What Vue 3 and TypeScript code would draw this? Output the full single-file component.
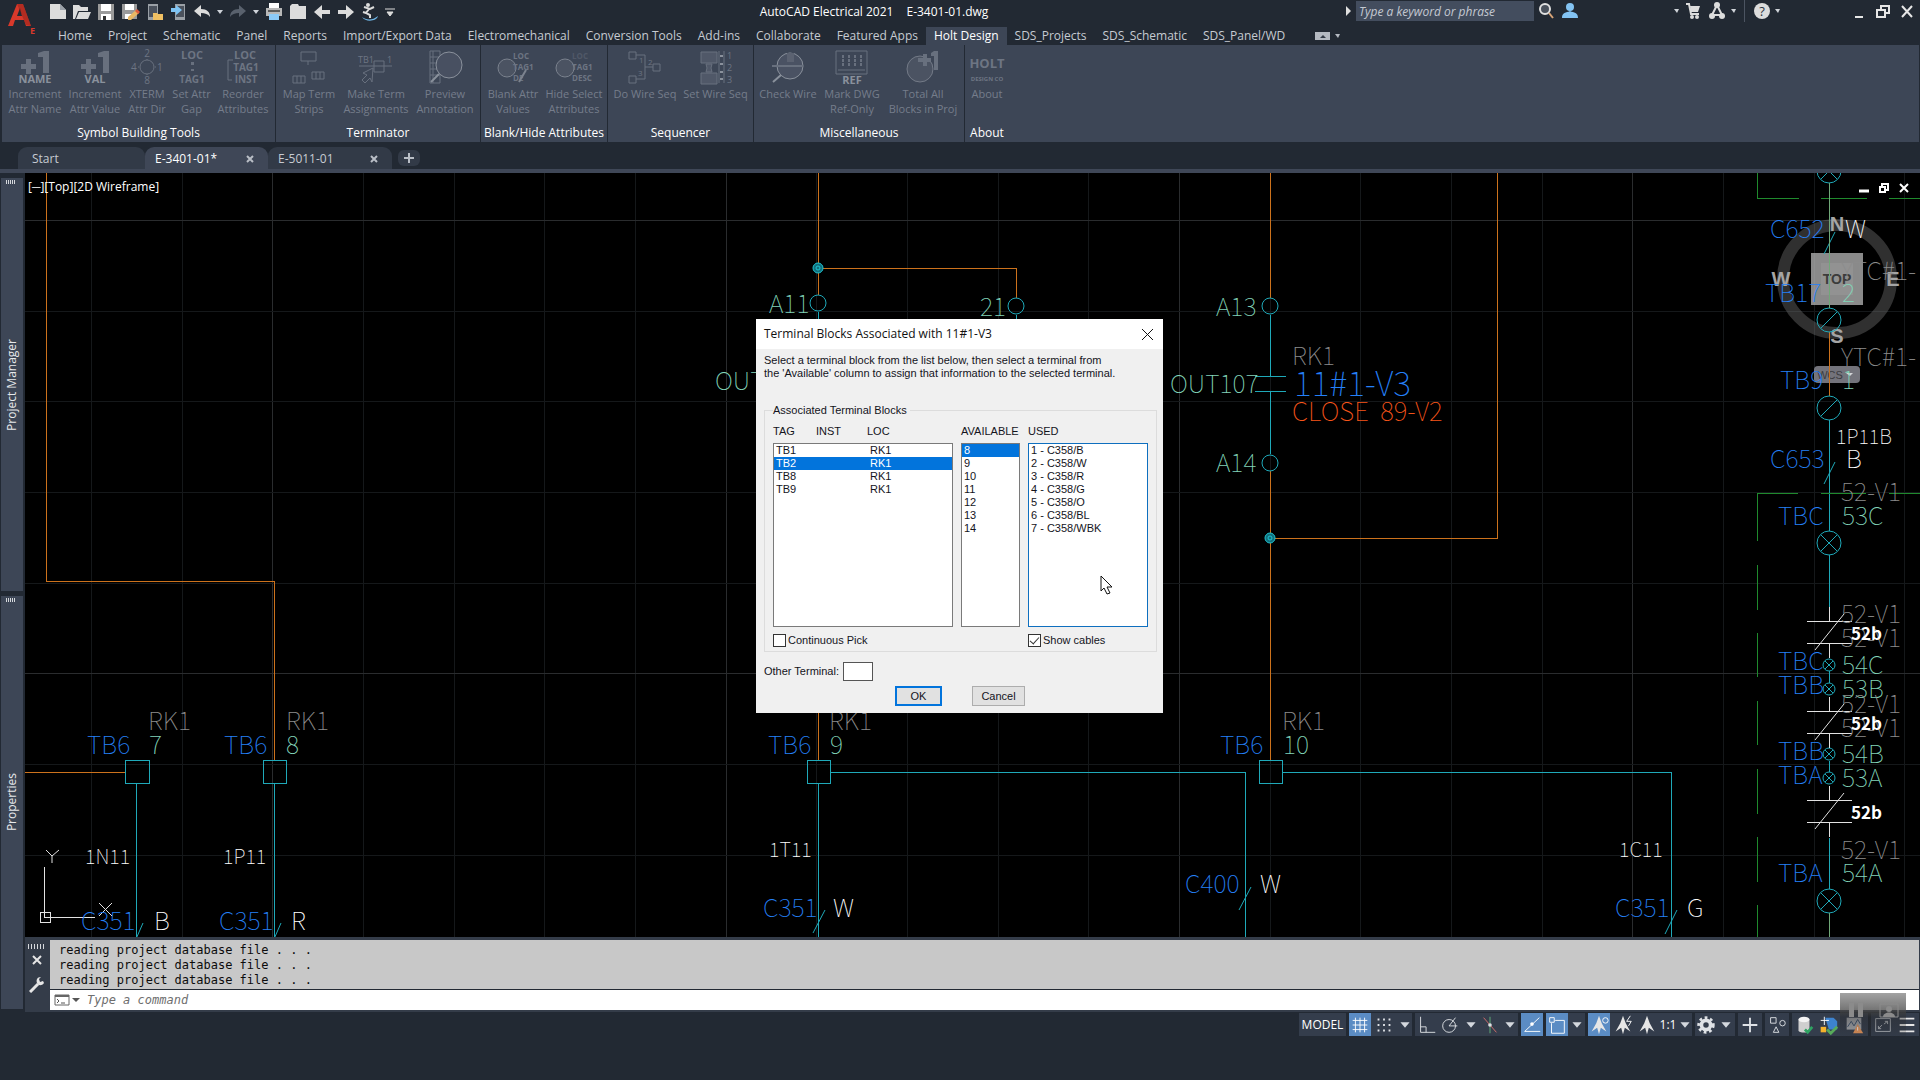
<script setup lang="ts">
import { ref } from 'vue'

interface Tool { label: string[]; icon: string; width: number }
interface Panel { title: string; tools: Tool[] }
type Label = [number, number, string, string]

const quickIcons: { name: string; art: string; caret?: boolean }[] = [
  { name: 'New', art: '<path d="M4 4h10l6 6v9H4z" fill="#dcdcdc"/><path d="M14 4v6h6z" fill="#9aa0a8"/>' },
  { name: 'Open', art: '<path d="M3 5h6l2 2h7v4H8l-3 8H3z" fill="#dcdcdc"/><path d="M9 12h12l-3 7H6z" fill="#dcdcdc"/>' },
  { name: 'Save', art: '<path d="M4 4h16v16H4z" fill="#9a9a9a"/><path d="M7 4h10v7H7z" fill="#fff"/><path d="M7 14h10v6H7z" fill="#fff"/><path d="M9 16h3v4H9z" fill="#333"/>' },
  { name: 'Save As', art: '<path d="M4 4h15v15H4z" fill="#9a9a9a"/><path d="M7 4h9v6H7z" fill="#fff"/><path d="M7 14h7v5H7z" fill="#fff"/><path d="M10 17l8-7 3 3-8 7h-3z" fill="#e9b864"/><path d="M17 11l2-2 3 3-2 2z" fill="#e05a3c"/>' },
  { name: 'Open from Web and Mobile', art: '<path d="M6 4h10v16H6z" fill="#9aa0a6"/><path d="M7 6h8v11H7z" fill="#4a515c"/><path d="M11 13h4l1 1h5v6H11z" fill="#f0c063"/>' },
  { name: 'Save to Web and Mobile', art: '<path d="M9 4h10v16H9z" fill="#9aa0a6"/><path d="M10 6h8v11h-8z" fill="#4a515c"/><path d="M5 8h5V5l6 5-6 5v-3H5z" fill="#7fc4f4"/>' },
  { name: 'Undo', art: '<path d="M4 11l7-6v4c6 0 9 3 9 8-2-3-5-4-9-4v4z" fill="#dcdcdc"/>', caret: true },
  { name: 'Redo', art: '<path d="M20 11l-7-6v4c-6 0-9 3-9 8 2-3 5-4 9-4v4z" fill="#59616d"/>', caret: true },
  { name: 'Plot', art: '<path d="M7 3h10v5H7z" fill="#fff"/><path d="M4 8h16v8H4z" fill="#b8b8b8"/><path d="M6 10h12v2H6z" fill="#5a5a5a"/><path d="M7 14h10v6H7z" fill="#8ccaf7"/>' },
  { name: 'Project', art: '<path d="M4 6l2-2h6l1 2h7v13H4z" fill="#dcdcdc"/>' },
  { name: 'Previous', art: '<path d="M4 12l8-7v5h8v4h-8v5z" fill="#dcdcdc"/>' },
  { name: 'Next', art: '<path d="M20 12l-8-7v5H4v4h8v5z" fill="#dcdcdc"/>' },
  { name: 'Surfer', art: '<circle cx="10" cy="5" r="2" fill="#dcdcdc"/><path d="M6 7l6 2 4-2M11 9l-3 4 4 2v3M5 12l3 1" stroke="#dcdcdc" stroke-width="2" fill="none"/><path d="M4 17c4 3 10 4 16-1-1 5-12 7-16 1z" fill="#6fb6e6"/>' }
]

const menuTabs = ['Home', 'Project', 'Schematic', 'Panel', 'Reports', 'Import/Export Data', 'Electromechanical', 'Conversion Tools', 'Add-ins', 'Collaborate', 'Featured Apps', 'Holt Design', 'SDS_Projects', 'SDS_Schematic', 'SDS_Panel/WD']
const activeMenu = ref('Holt Design')

const plusOne = (word: string) =>
  `<path d="M4 15h5v-5h5v5h5v5h-5v5H9v-5H4zM21 4l6-2h5v22h-6V8h-5z" fill="currentColor"/><text x="18" y="34" text-anchor="middle" font-size="11" font-weight="700" class="hot">${word}</text>`

const ribbon: Panel[] = [
  { title: 'Symbol Building Tools', tools: [
    { label: ['Increment', 'Attr Name'], width: 62, icon: plusOne('NAME') },
    { label: ['Increment', 'Attr Value'], width: 58, icon: plusOne('VAL') },
    { label: ['XTERM', 'Attr Dir'], width: 46, icon: '<circle cx="18" cy="18" r="7" fill="none" stroke="currentColor"/><path d="M10 18h-1M26 18h1M18 11v-1M18 25v1" stroke="currentColor"/><text x="18" y="8" text-anchor="middle" font-size="10">2</text><text x="18" y="35" text-anchor="middle" font-size="10">8</text><text x="2" y="22" font-size="10">4</text><text x="28" y="22" font-size="10">1</text>' },
    { label: ['Set Attr', 'Gap'], width: 43, icon: '<text x="18" y="10" text-anchor="middle" font-size="11" font-weight="700">LOC</text><path d="M17 13h3v3h-3zM17 20h3v2h-3z" fill="currentColor"/><text x="18" y="34" text-anchor="middle" font-size="10" font-weight="700">TAG1</text>' },
    { label: ['Reorder', 'Attributes'], width: 60, icon: '<text x="20" y="10" text-anchor="middle" font-size="11" font-weight="700">LOC</text><text x="21" y="22" text-anchor="middle" font-size="10" font-weight="700">TAG1</text><text x="21" y="34" text-anchor="middle" font-size="10" font-weight="700">INST</text><path d="M8 11H3v20h4" fill="none" stroke="currentColor"/>' }
  ] },
  { title: 'Terminator', tools: [
    { label: ['Map Term', 'Strips'], width: 62, icon: '<g fill="none" stroke="currentColor"><path d="M10 3h15v9H10zM17 12v4M2 27h12v7H2zM6 27v7M10 27v7M21 23h12v7H21zM25 23v7M29 23v7"/></g>' },
    { label: ['Make Term', 'Assignments'], width: 72, icon: '<g fill="none" stroke="currentColor"><path d="M1 17h33M16 12h10v11H16z" /><path d="M15 19l-10 5 4 2-5 5 3 3 5-5 2 4z"/></g><text x="0" y="14" font-size="9">TB1</text><text x="29" y="14" font-size="9">1</text>' },
    { label: ['Preview', 'Annotation'], width: 66, icon: '<g fill="none" stroke="currentColor"><path d="M3 2h10v32H3zM3 8h10M3 14h10M3 20h10M3 26h10M6 2v32"/></g><circle cx="22" cy="16" r="13" fill="#485061" stroke="#8a919c"/><path d="M12 25l-8 8" stroke="#8a919c" stroke-width="2"/>' }
  ] },
  { title: 'Blank/Hide Attributes', tools: [
    { label: ['Blank Attr', 'Values'], width: 60, icon: '<circle cx="12" cy="19" r="9" fill="#4b5362" stroke="#7b828e"/><g font-size="8" font-weight="700"><text x="18" y="10">LOC</text><text x="18" y="21">TAG1</text><text x="18" y="32">DE</text></g><path d="M31 21l-7 12" stroke="#7b828e" stroke-width="2"/>' },
    { label: ['Hide Select', 'Attributes'], width: 62, icon: '<circle cx="9" cy="19" r="9" fill="#4b5362" stroke="#7b828e"/><g font-size="8" font-weight="700"><text x="16" y="10" opacity=".4">LOC</text><text x="16" y="21">TAG1</text><text x="16" y="32">DESC</text></g>' }
  ] },
  { title: 'Sequencer', tools: [
    { label: ['Do Wire Seq'], width: 70, icon: '<path d="M2 3h7v7H2zM2 27h7v7H2zM26 15h7v7h-7zM9 6h9v24H9M18 18h8" fill="none" stroke="currentColor"/><g font-size="8"><text x="12" y="14">1</text><text x="21" y="16">2</text><text x="11" y="27">3</text></g>' },
    { label: ['Set Wire Seq'], width: 71, icon: '<path d="M3 3h16v11H3zM3 24h16v11H3zM8 15h6l-1 4 1 4H8l1-4zM21 2v32M26 2v32" fill="#505868" stroke="currentColor"/><path d="M22 7h3M22 15h3M22 23h3M22 30h3" stroke="#8a919c" stroke-width="2"/><g font-size="9"><text x="29" y="10">1</text><text x="29" y="22">2</text><text x="29" y="34">3</text></g>' }
  ] },
  { title: 'Miscellaneous', tools: [
    { label: ['Check Wire'], width: 64, icon: '<circle cx="20" cy="17" r="13" fill="#4a5263" stroke="#8a919c"/><path d="M17 4h7v9h-7z" fill="#5b6271"/><path d="M2 17h31" stroke="currentColor" stroke-width="2"/><path d="M11 26l-8 7" stroke="#8a919c" stroke-width="2"/>' },
    { label: ['Mark DWG', 'Ref-Only'], width: 64, icon: '<path d="M2 2h31v23H2zM4 21h27" fill="none" stroke="currentColor"/><path d="M9 6v11M15 6v11M21 6v11M27 6v11" stroke="currentColor" stroke-width="2" stroke-dasharray="3 1"/><text x="18" y="35" text-anchor="middle" font-size="11" font-weight="700" class="hot">REF</text>' },
    { label: ['Total All', 'Blocks in Proj'], width: 78, icon: '<circle cx="15" cy="20" r="13" fill="#4b5362" stroke="#737a87"/><path d="M13 9h5V5h4v4h4v4h-4v4h-4v-4h-5zM26 4l3-2h4v19h-4V7h-3z" fill="currentColor"/>' }
  ] },
  { title: 'About', tools: [
    { label: ['About'], width: 40, icon: '<text x="18" y="19" text-anchor="middle" font-size="13" font-weight="700">HOLT</text><text x="18" y="32" text-anchor="middle" font-size="6" font-weight="700">DESIGN CO</text>' }
  ] }
]

const files = [
  { name: 'Start', width: 127, closable: false },
  { name: 'E-3401-01*', width: 123, closable: true },
  { name: 'E-5011-01', width: 124, closable: true }
]
const activeFile = ref('E-3401-01*')

/* drawing grid: every fifth line is a major one */
const gridX = Array.from({ length: 21 }, (_, i) => ({ at: Math.round(91 + i * 90.67), major: i % 5 === 2 }))
const gridY = Array.from({ length: 9 }, (_, i) => ({ at: Math.round(220 + i * 90.67), major: i % 5 === 0 }))

const labels: Label[] = [
  [148, 730, 'RK1', 'dim'], [87, 754, 'TB6', 'tag'], [149, 754, '7', 'pin'],
  [286, 730, 'RK1', 'dim'], [224, 754, 'TB6', 'tag'], [286, 754, '8', 'pin'],
  [829, 730, 'RK1', 'dim'], [768, 754, 'TB6', 'tag'], [830, 754, '9', 'pin'],
  [1282, 730, 'RK1', 'dim'], [1220, 754, 'TB6', 'tag'], [1283, 754, '10', 'pin'],
  [85, 864, '1N11', 'wire'], [223, 864, '1P11', 'wire'], [769, 857, '1T11', 'wire'], [1619, 857, '1C11', 'wire'],
  [81, 930, 'C351', 'tag'], [154, 930, 'B', 'core'], [219, 930, 'C351', 'tag'], [291, 930, 'R', 'core'],
  [763, 917, 'C351', 'tag'], [833, 917, 'W', 'core'], [1185, 893, 'C400', 'tag'], [1260, 893, 'W', 'core'],
  [1615, 917, 'C351', 'tag'], [1687, 917, 'G', 'core'],
  [769, 313, 'A11', 'pin'], [980, 316, '21', 'pin'], [1216, 316, 'A13', 'pin'], [1216, 472, 'A14', 'pin'],
  [715, 390, 'OUT', 'pin'], [1170, 393, 'OUT107', 'pin'],
  [1292, 365, 'RK1', 'dim'], [1294, 396, '11#1-V3', 'device'], [1292, 421, 'CLOSE\u00a0 89-V2', 'note'],
  [1770, 238, 'C652', 'tag'], [1845, 238, 'W', 'core'], [1841, 280, 'YTC#1-', 'dim'],
  [1765, 302, 'TB17', 'tag'], [1842, 302, '2', 'pin'], [1841, 366, 'YTC#1-', 'dim'],
  [1780, 389, 'TB9', 'tag'], [1842, 389, '1', 'pin'], [1836, 444, '1P11B', 'wire'],
  [1770, 468, 'C653', 'tag'], [1846, 468, 'B', 'core'], [1841, 501, '52-V1', 'dim'],
  [1778, 525, 'TBC', 'tag'], [1842, 525, '53C', 'pin'],
  [1841, 623, '52-V1', 'dim'], [1841, 647, '52-V1', 'dim'], [1851, 640, '52b', 'contact'],
  [1778, 670, 'TBC', 'tag'], [1842, 674, '54C', 'pin'], [1778, 694, 'TBB', 'tag'], [1842, 698, '53B', 'pin'],
  [1841, 713, '52-V1', 'dim'], [1841, 737, '52-V1', 'dim'], [1851, 730, '52b', 'contact'],
  [1778, 760, 'TBB', 'tag'], [1842, 763, '54B', 'pin'], [1778, 784, 'TBA', 'tag'], [1842, 787, '53A', 'pin'],
  [1851, 819, '52b', 'contact'], [1841, 859, '52-V1', 'dim'], [1778, 882, 'TBA', 'tag'], [1842, 882, '54A', 'pin']
]

const blocks = [{ tag: 'TB1', loc: 'RK1' }, { tag: 'TB2', loc: 'RK1' }, { tag: 'TB8', loc: 'RK1' }, { tag: 'TB9', loc: 'RK1' }]
const available = ['8', '9', '10', '11', '12', '13', '14']
const used = ['1 - C358/B', '2 - C358/W', '3 - C358/R', '4 - C358/G', '5 - C358/O', '6 - C358/BL', '7 - C358/WBK']
const block = ref('TB2')
const terminal = ref('8')
const continuous = ref(false)
const showCables = ref(true)
const other = ref('')
const command = ref('')
const query = ref('')

const history = ['reading project database file . . .', 'reading project database file . . .', 'reading project database file . . .']

const compass = '<path d="M12 2l3 8 5 9-6-4-2 7-2-7-6 4 5-9z" fill="#e6e6e6"/>'
interface StatusItem { name: string; art?: string; text?: string; on?: boolean; width: number }
const caret = (name: string, width = 17): StatusItem => ({ name, width, art: '<path d="M7 9h10l-5 6z" fill="#d4d8de"/>' })
const statusGroups: StatusItem[][] = [
  [{ name: 'Model', text: 'MODEL', width: 47 }],
  [{ name: 'Grid', on: true, width: 22, art: '<path d="M7 4v16M12 4v16M17 4v16M4 7h16M4 12h16M4 17h16" stroke="#fff" fill="none"/>' },
    { name: 'Snap', width: 26, art: '<path d="M5 6h14M5 12h14M5 18h14" stroke="#dfe2e6" stroke-width="2" stroke-dasharray="2 4"/>' }, caret('Snap options', 15)],
  [{ name: 'Ortho', width: 23, art: '<path d="M5 3v17h16M5 14h6v6" stroke="#dfe2e6" fill="none"/>' },
    { name: 'Polar', width: 24, art: '<circle cx="11" cy="13" r="7" fill="none" stroke="#dfe2e6"/><path d="M11 13h9M11 13l7-9" stroke="#dfe2e6"/>' }, caret('Polar options'),
    { name: 'Isometric', width: 22, art: '<path d="M12 3v18" stroke="#63b17c"/><path d="M5 4l14 16" stroke="#d9706d"/><circle cx="12" cy="12" r="2" fill="#dfe2e6"/>' }, caret('Isometric options')],
  [{ name: 'Tracking', on: true, width: 22, art: '<path d="M20 4L4 19h17" stroke="#fff" fill="none"/><circle cx="12" cy="11" r="2" fill="#fff"/>' }],
  [{ name: 'Object Snap', on: true, width: 22, art: '<path d="M10 7h10v14H6V10" stroke="#fff" fill="none"/><path d="M4 4h5v5H4z" stroke="#fff" fill="none"/>' }, caret('Snap list')],
  [{ name: 'Visibility', on: true, width: 22, art: compass + '<circle cx="19" cy="7" r="3" fill="none" stroke="#fff"/>' },
    { name: 'Auto scale', width: 25, art: compass + '<path d="M20 2l-4 6h5l-3 5" stroke="#fff" fill="none"/>' },
    { name: 'Annotation', width: 24, art: compass }, { name: 'Scale', text: '1:1', width: 18 }, caret('Scale list', 15)],
  [{ name: 'Workspace', width: 22, art: '<circle cx="12" cy="12" r="5" fill="none" stroke="#dfe2e6" stroke-width="4"/><circle cx="12" cy="12" r="8" fill="none" stroke="#dfe2e6" stroke-width="3" stroke-dasharray="3 3"/>' }, caret('Workspace list', 18)],
  [{ name: 'Monitor', width: 24, art: '<path d="M12 4v16M4 12h16" stroke="#dfe2e6" stroke-width="2"/>' }],
  [{ name: 'Isolate', width: 24, art: '<path d="M5 4h6v6H5zM11 14l3 6H8z" fill="none" stroke="#dfe2e6"/><circle cx="18" cy="10" r="3" fill="none" stroke="#dfe2e6"/>' }],
  [{ name: 'Data', width: 24, art: '<path d="M6 6v12c0 3 12 3 12 0V6z" fill="#cfcfcf"/><ellipse cx="12" cy="6" rx="6" ry="3" fill="#f4f4f4"/><path d="M13 17l3 3 5-6" stroke="#2fa362" stroke-width="3" fill="none"/>' },
    { name: 'Standards', width: 24, art: '<path d="M9 4h9l4 4v9h-9z" fill="#3d83cf"/><path d="M4 7h9M8 3v9" stroke="#fff"/><path d="M4 14h6v6H4z" fill="#f5b22c"/><path d="M11 17l4 4 7-7" stroke="#57ab5a" stroke-width="3" fill="none"/>' },
    { name: 'Trace', width: 28, art: '<path d="M4 4h16v13H4z" fill="#a8abb0"/><path d="M5 14l4-6 3 5 4-7 3 5" stroke="#37506e" fill="none"/><path d="M16 11l6 10H11z" fill="#e8965b"/><path d="M16 14v4" stroke="#fff"/>' }],
  [{ name: 'Clean Screen', width: 24, art: '<path d="M4 5h16v14H4zM7 16l4-4M13 11l4-3M7 13v3h3M14 8h3v3" fill="none" stroke="#b9bdc3"/>' },
    { name: 'Customize', width: 24, art: '<path d="M4 5h16M4 12h16M4 19h16" stroke="#e6e6e6" stroke-width="2"/>' }]
]
</script>

<template>
  <div class="app">
    <header class="titlebar">
      <button class="logo" aria-label="Application menu">
        <svg width="36" height="36" viewBox="0 0 36 36"><path d="M5 26L14 4h6l8 22h-5l-2-6H12l-2 6zM14 16h5l-2-8z" fill="#d8392b" /><path d="M14 4h6l8 22-5-1z" fill="#8e1f18" opacity=".5" /><text x="27" y="34" font-size="9" font-weight="700" fill="#d8392b">E</text></svg>
      </button>
      <nav class="quick" aria-label="Quick access">
        <template v-for="q in quickIcons" :key="q.name">
          <button :aria-label="q.name"><svg width="24" height="24" viewBox="0 0 24 24" v-html="q.art" /></button>
          <button v-if="q.caret" class="mini" :aria-label="q.name + ' list'"><svg width="6" height="4"><path d="M0 0h6l-3 4z" fill="#cfd3d9" /></svg></button>
        </template>
        <button class="mini wide-mini" aria-label="Customize"><svg width="10" height="8"><path d="M0 1h10M2 4h6l-3 4z" stroke="#dcdcdc" fill="#dcdcdc" /></svg></button>
      </nav>
      <h1 class="caption"><span>AutoCAD Electrical 2021</span><span>E-3401-01.dwg</span></h1>
      <div class="infocenter">
        <svg width="5" height="10"><path d="M0 0l5 5-5 5z" fill="#e0e0e0" /></svg>
        <input v-model="query" type="text" class="search" placeholder="Type a keyword or phrase" aria-label="Search">
        <button aria-label="Find"><svg width="24" height="22" viewBox="0 0 24 22"><circle cx="11" cy="9" r="5" fill="#4a515c" stroke="#e0e0e0" stroke-width="2" /><path d="M15 13l4 5" stroke="#d9a577" stroke-width="2" /></svg></button>
        <button aria-label="Sign in"><svg width="24" height="22" viewBox="0 0 24 22"><circle cx="12" cy="7" r="4" fill="#83c3f3" /><path d="M4 18c0-6 4-5 8-7 4 2 8 1 8 7z" fill="#83c3f3" /></svg></button>
      </div>
      <div class="account">
        <svg width="5" height="4"><path d="M0 0h5l-2 4z" fill="#cfd3d9" /></svg>
        <button aria-label="Store"><svg width="20" height="22" viewBox="0 0 20 22"><path d="M3 4h3l2 10h8" fill="none" stroke="#dcdcdc" stroke-width="2" /><path d="M7 6h10l-2 6H8z" fill="#dcdcdc" /><circle cx="9" cy="17" r="2" fill="#dcdcdc" /><circle cx="14" cy="17" r="2" fill="#dcdcdc" /></svg></button>
        <button aria-label="Autodesk App"><svg width="20" height="22" viewBox="0 0 20 22"><path d="M10 5L5 15h10z" fill="none" stroke="#dcdcdc" stroke-width="2" /><circle cx="10" cy="5" r="3" fill="#dcdcdc" /><circle cx="5" cy="16" r="3" fill="#dcdcdc" /><circle cx="15" cy="16" r="3" fill="#dcdcdc" /></svg></button>
        <svg width="5" height="4"><path d="M0 0h5l-2 4z" fill="#cfd3d9" /></svg>
        <i class="divider" />
        <button aria-label="Help"><svg width="18" height="18"><circle cx="9" cy="9" r="8" fill="#dcdcdc" /><text x="9" y="14" text-anchor="middle" font-size="13" fill="#2b323c">?</text></svg></button>
        <svg width="5" height="4"><path d="M0 0h5l-2 4z" fill="#cfd3d9" /></svg>
      </div>
      <div class="winctl">
        <button aria-label="Minimize"><svg width="24" height="22"><path d="M8 17h8" stroke="#e6e6e6" stroke-width="2" /></svg></button>
        <button aria-label="Restore"><svg width="24" height="22"><path d="M6 10h8v7H6zM10 10V6h8v7h-4" fill="none" stroke="#e6e6e6" stroke-width="2" /></svg></button>
        <button aria-label="Close"><svg width="24" height="22"><path d="M7 6l10 11M17 6L7 17" stroke="#e6e6e6" stroke-width="2" /></svg></button>
      </div>
    </header>

    <nav class="menu" aria-label="Ribbon tabs">
      <button v-for="m in menuTabs" :key="m" :class="{ active: m === activeMenu }" @click="activeMenu = m">{{ m }}</button>
      <button class="fold" aria-label="Minimize ribbon"><svg width="26" height="10"><path d="M0 1h15v8H0z" fill="#b4b9c1" /><path d="M5 7l3-3 3 3z" fill="#333b47" /><path d="M20 3h5l-2 4z" fill="#b4b9c1" /></svg></button>
    </nav>

    <section class="ribbon">
      <div v-for="p in ribbon" :key="p.title" class="panel">
        <div class="tools">
          <button v-for="t in p.tools" :key="t.label.join(' ')" class="tool" disabled :style="{ width: t.width + 'px' }">
            <svg width="36" height="36" viewBox="0 0 36 36" v-html="t.icon" />
            <span v-for="l in t.label" :key="l">{{ l }}</span>
          </button>
        </div>
        <h2>{{ p.title }}</h2>
      </div>
    </section>

    <nav class="files" aria-label="Drawings">
      <div v-for="f in files" :key="f.name" class="file" :class="{ active: f.name === activeFile }" :style="{ width: f.width + 'px' }">
        <button class="open" @click="activeFile = f.name">{{ f.name }}</button>
        <button v-if="f.closable" class="shut" :aria-label="'Close ' + f.name"><svg width="8" height="8"><path d="M1 1l6 6M7 1L1 7" stroke="#b9bec6" stroke-width="2" /></svg></button>
      </div>
      <button class="add" aria-label="New drawing"><svg width="10" height="10"><path d="M5 0v10M0 5h10" stroke="#b9bec6" stroke-width="2" /></svg></button>
    </nav>

    <div class="workspace">
      <aside class="palettes">
        <button class="palette"><i class="grip" /><span>Project Manager</span></button>
        <button class="palette"><i class="grip" /><span>Properties</span></button>
      </aside>
      <main class="editor">
        <div class="canvas">
          <svg class="sheet" aria-label="Wiring drawing">
            <g transform="translate(-25 -173)">
              <g class="grid" shape-rendering="crispEdges">
                <line v-for="g in gridX" :key="'x' + g.at" :x1="g.at" :x2="g.at" y1="173" y2="940" :class="{ major: g.major }" />
                <line v-for="g in gridY" :key="'y' + g.at" :y1="g.at" :y2="g.at" x1="25" x2="1920" :class="{ major: g.major }" />
              </g>
              <g class="cube">
                <circle cx="1837" cy="279" r="54" />
                <rect x="1811" y="253" width="52" height="52" /><rect x="1821" y="263" width="32" height="32" class="inner" />
                <text x="1837" y="284" class="face">TOP</text>
                <text x="1837" y="231">N</text><text x="1781" y="286">W</text><text x="1893" y="286">E</text><text x="1837" y="343">S</text>
                <rect x="1814" y="366" width="46" height="17" rx="4" class="wcs" /><text x="1830" y="379" class="wcs-text">WCS</text><path d="M1846 373h7l-3 3z" fill="#d5d5d8" />
              </g>
              <g class="orange" shape-rendering="crispEdges">
                <path d="M46 173V581H274V760M25 772H125M818 173V295M818 268H1016V298M818 713V760M1270 173V298M1270 471V760M1270 538H1497V173M1829 332V396" />
              </g>
              <g class="cyan">
                <path shape-rendering="crispEdges" d="M136 784V937M274 784V937M818 784V937M830 772H1245V937M1282 772H1671V937M818 312V400M1016 315V400M1270 315V376M1270 391V454M1255 376h31M1255 391h31M1829 420V531M1829 555V607M1829 671V683M1829 761V772M1829 838V889M125 760h24v23h-24zM263 760h23v23h-23zM807 760h23v23h-23zM1259 760h23v23h-23z" />
                <path d="M143 923l-7 16M281 923l-7 16M825 910l-12 23M1251 887l-12 23M1677 910l-12 24M1835 232l-11 22M1835 462l-11 22" />
                <circle cx="818" cy="303" r="8" /><circle cx="1016" cy="306" r="8" /><circle cx="1270" cy="306" r="8" /><circle cx="1270" cy="463" r="8" />
                <g v-for="y in [171, 543, 901]" :key="y"><circle cx="1829" :cy="y" r="12" /><path :d="`M1821 ${y - 8}l16 16M1837 ${y - 8}l-16 16`" /></g>
                <g v-for="y in [320, 408]" :key="y"><circle cx="1829" :cy="y" r="12" /><path :d="`M1821 ${y + 8}l16-16`" /></g>
                <g v-for="y in [665, 689, 754, 778]" :key="y"><circle cx="1829" :cy="y" r="6" /><path :d="`M1825 ${y - 4}l8 8M1833 ${y - 4}l-8 8`" /></g>
                <g v-for="p in [[818, 268], [1270, 538]]" :key="p[0]" class="node"><circle :cx="p[0]" :cy="p[1]" r="5" /><circle :cx="p[0]" :cy="p[1]" r="2" /></g>
              </g>
              <g class="green" shape-rendering="crispEdges">
                <path d="M1757 173V198H1799M1821 198h46M1889 198h31M1757 541V493H1798M1821 493h45M1889 493h31" />
                <path d="M1757 565v45M1757 633v44M1757 701v44M1757 769v45M1757 837v45M1757 905v32" />
                <path d="M1829 183V308M1829 913V937" class="pale" />
              </g>
              <g v-for="y in [621, 711, 800]" :key="y" class="white"><path shape-rendering="crispEdges" :d="`M1829 ${y - 14}v14M1807 ${y}h45M1807 ${y + 22}h45M1829 ${y + 22}v15`" /><path :d="`M1844 ${y - 7}l-29 36`" /></g>
              <g class="white"><path shape-rendering="crispEdges" d="M44 867V917H95M40 912h10v10H40z" /><path d="M46 850l6 6 7-6M52 856v7M99 903l13 13M112 903l-13 13" /></g>
              <text v-for="(l, i) in labels" :key="i" :x="l[0]" :y="l[1]" :class="['cad', l[3]]">{{ l[2] }}</text>
            </g>
          </svg>
          <p class="viewlabel">[─][Top][2D Wireframe]</p>
          <div class="docctl">
            <button aria-label="Minimize drawing"><svg width="10" height="10"><path d="M0 8h10" stroke="#fff" stroke-width="3" /></svg></button>
            <button aria-label="Restore drawing"><svg width="10" height="10"><path d="M1 4h5v5H1zM3 3V1h6v6H7" fill="none" stroke="#fff" stroke-width="2" /></svg></button>
            <button aria-label="Close drawing"><svg width="10" height="10"><path d="M1 1l8 8M9 1L1 9" stroke="#fff" stroke-width="2" /></svg></button>
          </div>

          <form class="dialog" role="dialog" aria-labelledby="dlg-title" @submit.prevent>
            <header><h2 id="dlg-title">Terminal Blocks Associated with 11#1-V3</h2><button type="button" aria-label="Close"><svg width="11" height="11"><path d="M0 0l11 11M11 0L0 11" stroke="#111" /></svg></button></header>
            <p class="hint">Select a terminal block from the list below, then select a terminal from<br>the 'Available' column to assign that information to the selected terminal.</p>
            <fieldset>
              <legend>Associated Terminal Blocks</legend>
              <div class="lists">
                <div class="col wide">
                  <div class="heads"><span>TAG</span><span>INST</span><span>LOC</span></div>
                  <ul role="listbox" aria-label="Terminal blocks">
                    <li v-for="b in blocks" :key="b.tag" role="option" :aria-selected="b.tag === block" @click="block = b.tag"><span>{{ b.tag }}</span><span>{{ b.loc }}</span></li>
                  </ul>
                </div>
                <div class="col mid">
                  <div class="heads"><span>AVAILABLE</span></div>
                  <ul role="listbox" aria-label="Available">
                    <li v-for="a in available" :key="a" role="option" :aria-selected="a === terminal" @click="terminal = a">{{ a }}</li>
                  </ul>
                </div>
                <div class="col last">
                  <div class="heads"><span>USED</span></div>
                  <ul role="listbox" aria-label="Used" class="focus"><li v-for="u in used" :key="u" role="option" aria-selected="false">{{ u }}</li></ul>
                </div>
              </div>
              <div class="checks">
                <label><input v-model="continuous" type="checkbox">Continuous Pick</label>
                <label><input v-model="showCables" type="checkbox">Show cables</label>
              </div>
            </fieldset>
            <div class="other"><label for="other">Other Terminal:</label><input id="other" v-model="other" type="text"></div>
            <div class="actions"><button type="submit" class="ok">OK</button><button type="button" class="cancel">Cancel</button></div>
            <svg class="pointer" width="13" height="20"><path d="M1 1v15l3-3 3 6 3-1-3-6h5z" fill="#fff" stroke="#111" /></svg>
          </form>
        </div>

        <section class="commandline">
          <div class="handle">
            <i class="dots" />
            <button aria-label="Close command line"><svg width="10" height="10"><path d="M1 1l8 8M9 1L1 9" stroke="#e6e6e6" stroke-width="2" /></svg></button>
            <button aria-label="Customize"><svg width="16" height="16"><path d="M1 15l8-8" stroke="#e6e6e6" stroke-width="3" /><path d="M14 4l-3 1-1-3 2-2c-4 0-5 3-4 6s5 3 7 0z" fill="#e6e6e6" /></svg></button>
          </div>
          <div class="console">
            <ol><li v-for="(h, i) in history" :key="i">{{ h }}</li></ol>
            <label class="prompt"><svg width="26" height="12"><path d="M1 1h14v10H1z" fill="#fff" stroke="#666" /><path d="M1 1h14v2H1z" fill="#666" /><path d="M3 5l2 2-2 2M7 9h4" fill="none" stroke="#555" /><path d="M18 4h8l-4 4z" fill="#555" /></svg><input v-model="command" type="text" placeholder="Type a command" aria-label="Command"></label>
          </div>
        </section>
      </main>
    </div>

    <footer class="status">
      <div v-for="(g, i) in statusGroups" :key="i" class="group">
        <button v-for="s in g" :key="s.name" :class="{ on: s.on }" :aria-label="s.name" :style="{ width: s.width + 'px' }">
          <template v-if="s.text">{{ s.text }}</template>
          <svg v-else width="22" height="22" viewBox="0 0 24 24" v-html="s.art" />
        </button>
      </div>
      <div class="player"><svg width="66" height="44"><path d="M9 10h5v14H9zM18 10h5v14h-5z" fill="#8b8b8b" /><path d="M40 11h18v13H40z" fill="none" stroke="#8b8b8b" /><circle cx="49" cy="16" r="3" fill="#8b8b8b" /><path d="M43 24c0-6 12-6 12 0z" fill="#8b8b8b" /></svg></div>
    </footer>
  </div>
</template>

<style>
body { background: #222933; }
</style>

<style scoped>
* { box-sizing: border-box; margin: 0; padding: 0; }
.app { min-height: 100vh; display: flex; flex-direction: column; background: #222933; color: #fff; font: 12px/16px "Open Sans", "Noto Sans", sans-serif; overflow: hidden; }
button { background: none; border: 0; color: inherit; font: inherit; display: flex; align-items: center; justify-content: center; white-space: nowrap; }
svg { display: block; flex: none; }
ul, ol { list-style: none; }

.titlebar { height: 27px; display: flex; align-items: flex-start; }
.logo { width: 46px; height: 36px; justify-content: flex-start; padding-left: 3px; }
.quick { display: flex; height: 24px; }
.quick .mini { width: 12px; }
.quick .wide-mini { width: 16px; }
.caption { flex: 1; display: flex; justify-content: center; gap: 13px; font-size: 12px; font-weight: 400; line-height: 24px; padding-left: 4px; }
.infocenter { display: flex; align-items: center; height: 22px; }
.search { width: 178px; height: 20px; margin: 0 0 0 5px; padding: 0 3px; border: 0; background: #434d5e; color: #fff; font: italic 12px "Open Sans", sans-serif; }
.search::placeholder { color: #c3c9d2; opacity: 1; }
.account { display: flex; align-items: center; height: 22px; gap: 4px; margin-left: 92px; }
.divider { width: 1px; height: 22px; margin: 0 4px; background: #4c5461; }
.winctl { display: flex; margin-left: 67px; padding-right: 1px; }

.menu { display: flex; height: 18px; padding-left: 50px; color: #c6cbd2; }
.menu button { padding: 0 8px; height: 18px; }
.menu .active { background: #3d4656; color: #fff; }
.menu .fold { padding-left: 22px; }

.ribbon { display: flex; height: 97px; background: #3d4656; margin: 0 1px 0 2px; }
.panel { border-right: 1px solid #222933; display: flex; flex-direction: column; padding: 4px 2px 0; }
.panel:last-child { border-right: 0; }
.tools { display: flex; flex: 1; }
.tool { flex-direction: column; justify-content: flex-start; color: #757d8b; font-size: 11px; line-height: 15px; }
.tool svg { color: #68707e; margin-bottom: 1px; overflow: visible; }
.tool :deep(text) { fill: #6d7583; font-family: "Open Sans", sans-serif; }
.tool :deep(.hot) { fill: #8a919c; }
.panel h2 { font-size: 12px; font-weight: 400; text-align: center; line-height: 18px; white-space: nowrap; }

.files { display: flex; align-items: flex-end; height: 31px; padding-left: 18px; border-bottom: 4px solid #3f4757; }
.file { display: flex; align-items: center; justify-content: space-between; height: 22px; padding: 1px 14px 0; border-radius: 9px 9px 0 0; background: #323a47; color: #c6cbd2; }
.file.active { background: #3f4757; color: #fff; }
.file + .file { padding-left: 10px; }
.add { width: 22px; height: 16px; margin: 0 0 3px 6px; background: #323a47; border-radius: 6px; }

.workspace { flex: 1; display: flex; }
.palettes { width: 25px; display: flex; flex-direction: column; gap: 5px; padding: 5px 2px 3px 1px; }
.palette { position: relative; flex: 1; background: #3d4656; color: #e6e8eb; }
.palette span { writing-mode: vertical-rl; transform: rotate(180deg); line-height: 16px; }
.grip { position: absolute; top: 2px; left: 5px; width: 10px; height: 4px; background: repeating-linear-gradient(90deg, #d5d8dc 0 1px, transparent 1px 2px); }
.editor { flex: 1; min-width: 0; display: flex; flex-direction: column; }
.canvas { position: relative; flex: 1; min-height: 560px; background: #000; overflow: hidden; }
.sheet { position: absolute; inset: 0; width: 100%; height: 100%; }
.grid line { stroke: #15181a; }
.grid .major { stroke: #2a2c2e; }
.orange path { fill: none; stroke: #cc721c; }
.cyan path, .cyan circle { fill: none; stroke: #1fa9b9; }
.cyan .node circle { fill: #106f7c; stroke: #1fc3d0; }
.green path { fill: none; stroke: #1f8a2d; }
.green .pale { stroke: #70a878; }
.white path { fill: none; stroke: #e2e2e2; }
.cad { font-family: "Noto Sans CJK SC", "Roboto", sans-serif; font-weight: 100; font-size: 25px; }
.dim { fill: #8c8c8c; }
.tag { fill: #2580f8; }
.pin { fill: #82d4b8; }
.wire { fill: #fff; font-size: 20px; }
.core { fill: #fff; }
.device { fill: #2580f8; font-size: 34px; }
.note { fill: #f8551a; font-size: 26px; }
.contact { fill: #fff; font-size: 17px; font-weight: 700; }
.cube { font: 700 20px "Liberation Sans", sans-serif; text-anchor: middle; fill: #a5a5a5; }
.cube circle { fill: none; stroke: #777; stroke-width: 12; opacity: .4; }
.cube rect { fill: #b8b8b8; opacity: .75; }
.cube .inner { fill: #999; opacity: .5; }
.cube .face { font-size: 14px; fill: #3c3c3c; }
.cube .wcs { fill: #9a9aa4; opacity: .75; }
.cube .wcs-text { font-size: 11px; font-weight: 400; fill: #3c3c40; }
.viewlabel { position: absolute; left: 3px; top: 5px; line-height: 18px; }
.docctl { position: absolute; right: 11px; top: 10px; display: flex; gap: 10px; }

.dialog { position: absolute; left: 731px; top: 146px; width: 407px; height: 394px; background: #f0f0f0; color: #14141c; font: 11px/13px "Liberation Sans", Arial, sans-serif; }
.dialog header { display: flex; align-items: center; justify-content: space-between; height: 30px; padding: 0 10px 0 8px; background: #fff; }
.dialog header h2 { font: 12px/16px "Open Sans", sans-serif; color: #111; }
.hint { padding: 5px 8px 0; height: 55px; white-space: nowrap; }
fieldset { margin: 0 6px 0 8px; height: 248px; border: 1px solid #dcdcdc; padding: 0 8px; }
legend { padding: 0 3px 0 0; }
.lists { display: flex; gap: 8px; }
.heads { height: 26px; padding-top: 8px; }
.wide { width: 180px; } .mid { width: 59px; } .last { width: 120px; }
.wide .heads { display: grid; grid-template-columns: 43px 51px 1fr; }
.col ul { height: 184px; border: 1px solid #7a7a7a; background: #fff; }
.col .focus { border-color: #0e6fbf; }
.col li { height: 13px; padding: 0 2px; }
.wide li { display: grid; grid-template-columns: 94px 1fr; }
li[aria-selected="true"] { background: #0274dc; color: #fff; }
.checks { display: flex; padding-top: 7px; }
.checks label { display: flex; align-items: center; gap: 2px; width: 255px; white-space: nowrap; }
.checks label:last-child { width: auto; }
.checks input { appearance: none; width: 13px; height: 13px; border: 1px solid #333; background: #fff; display: grid; place-items: center; }
.checks input:checked::after { content: ""; width: 4px; height: 8px; border: solid #333; border-width: 0 1px 1px 0; transform: rotate(42deg); margin-bottom: 2px; }
.other { display: flex; align-items: center; gap: 4px; height: 20px; padding-left: 8px; margin-top: 9px; }
.other input { width: 30px; height: 19px; border: 1px solid #555; background: #fff; }
.actions { display: flex; gap: 30px; padding: 5px 0 0 139px; }
.actions button { height: 20px; background: #e1e1e1; border: 1px solid #adadad; }
.actions .ok { width: 47px; border: 2px solid #0274dc; }
.actions .cancel { width: 53px; }
.pointer { position: absolute; left: 344px; top: 256px; }

.commandline { display: flex; height: 75px; padding: 3px 1px 2px 0; background: #343c49; }
.handle { width: 25px; display: flex; flex-direction: column; align-items: center; gap: 12px; padding: 4px 2px 0 0; }
.dots { width: 17px; height: 5px; margin-bottom: -6px; background: repeating-linear-gradient(90deg, #d5d8dc 0 1px, transparent 1px 3px); }
.console { flex: 1; font: 12px/15px "DejaVu Sans Mono", monospace; color: #0c0c0c; background: #fff; }
.console ol { height: 50px; padding: 3px 9px 0; background: #c8c8c8; border-bottom: 1px solid #222933; }
.prompt { display: flex; align-items: center; gap: 7px; height: 20px; padding-left: 4px; }
.prompt input { flex: 1; border: 0; outline: 0; background: none; font: italic 12px "DejaVu Sans Mono", monospace; }
.prompt input::placeholder { color: #6e6e6e; opacity: 1; }

.status { position: relative; display: flex; justify-content: flex-end; gap: 3px; height: 68px; padding: 1px 1px 44px 0; }
.group { display: flex; height: 23px; background: #343d4c; }
.status .on { background: #5b8cc4; }
.player { position: absolute; right: 14px; top: -19px; width: 66px; height: 44px; background: linear-gradient(rgba(140, 140, 140, .8), rgba(60, 60, 60, .75) 45%, rgba(40, 40, 40, .4) 55%, rgba(40, 40, 40, .1)); }
</style>
